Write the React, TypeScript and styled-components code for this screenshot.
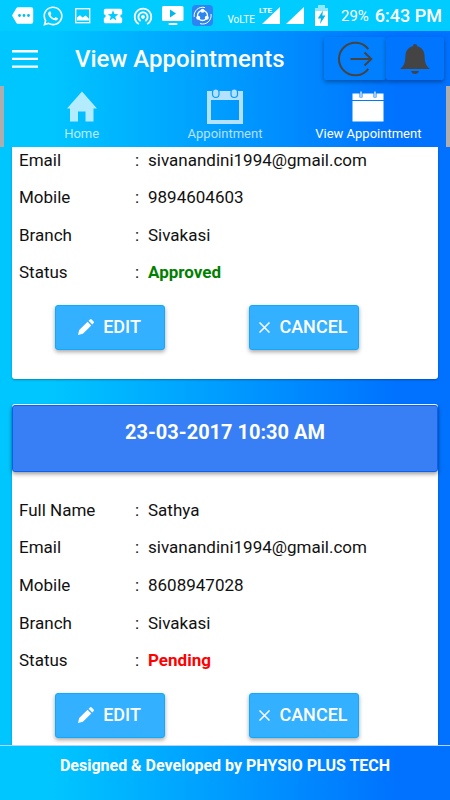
import React from "react";
import styled, { createGlobalStyle, css } from "styled-components";
import { FaWhatsapp } from "react-icons/fa";
import { MdLocalActivity, MdWifiTethering } from "react-icons/md";

const brandGradient = "linear-gradient(to right, #00c6ff 11%, #0072ff 88%)";

const GlobalStyle = createGlobalStyle`
  * { box-sizing: border-box; }
  body { margin: 0; font-family: Roboto, "Liberation Sans", sans-serif; }
  button { font-family: inherit; }
  svg { display: block; flex: none; }
`;

const Screen = styled.div`
  height: 100vh;
  display: flex;
  flex-direction: column;
  overflow: hidden;
  background: ${brandGradient};
`;

const StatusBar = styled.div`
  flex: none;
  height: 31px;
  padding: 0 8px 0 12px;
  display: flex;
  align-items: center;
  justify-content: space-between;
  background: #00ccff;
  color: #fff;
`;

const Notifications = styled.div`
  display: flex;
  align-items: center;
  gap: 8px;
`;

const Indicators = styled.div`
  display: flex;
  align-items: center;
`;

const NetworkLabel = styled.span`
  font-size: 10px;
  line-height: 12px;
  padding-top: 8px;
  margin-right: 4px;
`;

const BatteryLevel = styled.span`
  font-size: 15px;
  margin: 0 6px 0 12px;
`;

const Clock = styled.span`
  font-size: 18px;
  font-weight: 500;
`;

const TopArea = styled.header`
  flex: none;
`;

const TitleBar = styled.div`
  height: 55px;
  padding: 0 6px 0 12px;
  display: flex;
  align-items: center;
`;

const MenuButton = styled.button`
  border: 0;
  padding: 0;
  background: none;
  margin-right: 37px;
`;

const Title = styled.h1`
  flex: 1;
  margin: 0;
  font-size: 24px;
  line-height: 30px;
  font-weight: 500;
  color: #fff;
  white-space: nowrap;
`;

const ActionButton = styled.button<{ $wide?: boolean }>`
  width: ${(p) => (p.$wide ? 62 : 58)}px;
  height: 43px;
  padding: 0;
  border: 0;
  border-radius: 2px;
  background: ${(p) => (p.$wide ? "#007fff" : "#0075ff")};
  box-shadow: 0 2px 4px rgba(0, 0, 0, 0.35);
  display: flex;
  align-items: center;
  justify-content: center;
`;

const TabBar = styled.nav`
  height: 61px;
  padding: 0 6px;
  border: solid #adadad;
  border-width: 0 4px;
  display: flex;
`;

const Tab = styled.a<{ $active?: boolean }>`
  flex: 1 1 0;
  display: flex;
  flex-direction: column;
  align-items: center;
  padding-top: 2px;
  color: #fff;
  opacity: ${(p) => (p.$active ? 1 : 0.7)};
  font-size: 13px;
  line-height: 16px;
  text-decoration: none;
  white-space: nowrap;
`;

const Content = styled.main`
  flex: 1;
  min-height: 0;
  overflow: hidden;
  padding: 0 12px;
  display: flex;
  flex-direction: column;
  gap: 25px;
`;

const Card = styled.article<{ $continued?: boolean }>`
  flex: none;
  padding: ${(p) => (p.$continued ? "0" : "1px")} 0 29px;
  background: #fff;
  border-radius: ${(p) => (p.$continued ? "0 0 3px 3px" : "3px")};
  box-shadow: 0 1px 2px rgba(0, 0, 0, 0.3);
`;

const CardHeading = styled.h2`
  height: 67px;
  margin: 0 0 19px;
  padding-top: 14px;
  border: 1px solid #0c60ee;
  border-radius: 3px;
  background: #387ef5;
  box-shadow: 0 2px 4px rgba(0, 0, 0, 0.4);
  color: #fff;
  font-size: 20px;
  line-height: 24px;
  font-weight: 700;
  text-align: center;
`;

const Details = styled.dl<{ $continued?: boolean }>`
  margin: 0 7px 14px;
  height: 188px;
  display: grid;
  grid-auto-rows: 1fr;
  ${(p) =>
    p.$continued &&
    css`
      height: 150px;
      margin-top: -6px;
    `}
`;

const Detail = styled.div`
  display: flex;
  align-items: center;
  font-size: 17px;
  line-height: 24px;
  color: #111;
`;

const Label = styled.dt`
  width: 116px;
`;

const Value = styled.dd<{ $tone?: string }>`
  margin: 0;
  color: ${(p) => p.$tone ?? "inherit"};
  font-weight: ${(p) => (p.$tone ? 700 : 400)};
`;

const Colon = styled.span`
  width: 13px;
`;

const Buttons = styled.div`
  display: grid;
  grid-template-columns: 1fr 1fr;
  padding: 0 37px 0 43px;
  column-gap: 42px;
`;

const CardButton = styled.button`
  width: 110px;
  height: 45px;
  padding: 0 1px 1px 0;
  border: 1px solid #11a8ff;
  border-radius: 3px;
  background: #33b0ff;
  box-shadow: 0 2px 4px rgba(0, 0, 0, 0.35);
  color: #fff;
  display: flex;
  align-items: center;
  justify-content: center;
  gap: 9px;
  font-size: 18px;
  line-height: 24px;
  font-weight: 500;
`;

const Footer = styled.footer`
  flex: none;
  height: 55px;
  padding-top: 9px;
  border-top: 1px solid #b2d4ff;
  color: #fff;
  font-size: 16px;
  line-height: 22px;
  font-weight: 700;
  text-align: center;
`;

type Row = { label: string; value: string; tone?: string };

function DetailRows({ rows, continued }: { rows: Row[]; continued?: boolean }) {
  return (
    <Details $continued={continued}>
      {rows.map((r) => (
        <Detail key={r.label}>
          <Label>{r.label}</Label>
          <Colon>:</Colon>
          <Value $tone={r.tone}>{r.value}</Value>
        </Detail>
      ))}
    </Details>
  );
}

function CardActions() {
  return (
    <Buttons>
      <CardButton type="button">
        <svg width="16" height="16" viewBox="0 0 16 16" fill="#fff">
          <path d="M0 16l1.2-5L9.6 2.8l3.7 3.7-8.4 8.3zM10.6 1.8L12 .5q.8-.8 1.7 0l1.9 1.9q.8.8 0 1.6l-1.3 1.4z" />
        </svg>
        EDIT
      </CardButton>
      <CardButton type="button">
        <svg width="11" height="11" viewBox="0 0 11 11" stroke="#fff" strokeWidth="1.5">
          <path d="M.5.5l10 10M10.5.5l-10 10" />
        </svg>
        CANCEL
      </CardButton>
    </Buttons>
  );
}

function NotificationIcons() {
  return (
    <Notifications>
      <svg width="22" height="22" viewBox="0 0 22 22">
        <path fill="#fff" d="M6 2.2h13.4q1.8 0 1.8 1.8v13q0 1.8-1.8 1.8H6q-1 0-1.6-.9L0 10.5l4.4-7.4q.6-.9 1.6-.9z" />
        <g fill="#00bdf2">
          <circle cx="7.5" cy="10.5" r="1.4" />
          <circle cx="12" cy="10.5" r="1.4" />
          <circle cx="16.5" cy="10.5" r="1.4" />
        </g>
      </svg>
      <FaWhatsapp size={22} />
      <svg width="22" height="22" viewBox="0 0 22 22">
        <rect x="3.7" y="3.7" width="14" height="14" fill="none" stroke="#fff" strokeWidth="1.3" />
        <path fill="#fff" d="M5 15.5v-3l3-2.2 2.6 2.3 3-2 3.2 2.8v2.1z" />
      </svg>
      <MdLocalActivity size={22} />
      <MdWifiTethering size={22} />
      <svg width="22" height="22" viewBox="0 0 22 22">
        <rect y="1" width="21.5" height="15" rx="1.5" fill="#fff" />
        <path fill="#00b8f0" d="M8 4.5v8l6-4z" />
        <rect x="6.5" y="18" width="9" height="2" rx="1" fill="#fff" />
      </svg>
      <svg width="22" height="22" viewBox="0 0 22 22">
        <rect width="21" height="21" rx="4" fill="#2b86f3" />
        <g fill="none" stroke="#fff">
          <circle cx="10.5" cy="10.5" r="5" strokeWidth="1.3" />
          <path strokeWidth="1" d="M2.2 12A8.5 8.5 0 0 1 13 2.6M19 9A8.5 8.5 0 0 1 8 18.6" />
        </g>
        <g fill="#fff">
          <circle cx="10.5" cy="5.8" r="2" />
          <circle cx="6.2" cy="12.8" r="2" />
          <circle cx="14.8" cy="12.8" r="2" />
        </g>
      </svg>
    </Notifications>
  );
}

function SignalIcons() {
  return (
    <Indicators>
      <NetworkLabel>VoLTE</NetworkLabel>
      <svg width="22" height="19" viewBox="0 0 22 19">
        <path fill="#fff" d="M21 1v17H3z" />
        <path fill="#00ccff" d="M0 0h12v9H0z" />
        <text x="0" y="7" fill="#fff" fontSize="8" fontWeight="700" fontFamily="Roboto">
          LTE
        </text>
      </svg>
      <svg width="24" height="19" viewBox="0 0 24 19">
        <path fill="#fff" d="M23 1v17H5z" />
      </svg>
      <svg width="24" height="21" viewBox="0 0 24 21">
        <path fill="#8ee9ff" d="M13 0h7v3h3v5H10V3h3z" />
        <path fill="#fff" d="M10 6h13v15H10z" />
        <path fill="#00b8f0" d="M18 5.5l-5.2 8h3.2l-1 5.5 5.5-8.5h-3.2z" />
      </svg>
      <BatteryLevel>29%</BatteryLevel>
      <Clock>6:43 PM</Clock>
    </Indicators>
  );
}

export default function App() {
  return (
    <>
      <GlobalStyle />
      <Screen>
        <StatusBar>
          <NotificationIcons />
          <SignalIcons />
        </StatusBar>
        <TopArea>
          <TitleBar>
            <MenuButton type="button" aria-label="Menu">
              <svg width="26" height="20" viewBox="0 0 26 20" fill="#fff">
                <path d="M0 1h26v2.4H0zM0 8.7h26v2.4H0zM0 16.4h26v2.4H0z" />
              </svg>
            </MenuButton>
            <Title>View Appointments</Title>
            <ActionButton type="button" $wide aria-label="Log out">
              <svg width="36" height="36" viewBox="0 0 36 36" fill="none" stroke="#444" strokeWidth="2">
                <path d="M31.3 8.2A16.3 16.3 0 1 0 31.3 27.8M13.5 18H34M27.5 11.5L34.3 18l-6.8 6.5" />
              </svg>
            </ActionButton>
            <ActionButton type="button" aria-label="Notifications">
              <svg width="30" height="30" viewBox="0 0 30 30" fill="#444">
                <path d="M15 0q2 0 2.2 2.2C22 3.3 24.400 7 24.600 12c.2 7 1.200 9.500 5.400 13H0c4.200-3.500 5.200-6 5.400-13 .2-5 2.600-8.700 7.400-9.800Q13 0 15 0zM11 27h8q-1 3-4 3t-4-3z" />
              </svg>
            </ActionButton>
          </TitleBar>
          <TabBar>
            <Tab href="#home">
              <svg width="38" height="38" viewBox="0 0 38 38" fill="#fff">
                <path d="M19 3.500L34 20.500h-3.500V33.500h-8V23.500h-7.500v10h-8V20.500H4z" />
              </svg>
              Home
            </Tab>
            <Tab href="#appointment">
              <svg width="38" height="38" viewBox="0 0 38 38">
                <path fill="#fff" fillRule="evenodd" d="M1 3h36v33H1zM5 12v20h28V12z" />
                <g fill="#fff" stroke="#0a9cff" strokeWidth="1.2">
                  <rect x="6.5" y="1" width="6.5" height="8.500" rx="3.2" />
                  <rect x="25" y="1" width="6.5" height="8.500" rx="3.2" />
                </g>
              </svg>
              Appointment
            </Tab>
            <Tab href="#view" $active aria-current="page">
              <svg width="38" height="38" viewBox="0 0 38 38">
                <path fill="#fff" d="M3.500 5.500h31V12h-31zM3.500 13h31v20.500h-31z" />
                <path stroke="#0a7cff" strokeWidth="3" d="M12 4.500v5M26 4.500v5" />
                <path stroke="#fff" strokeWidth="1.2" d="M12 3.500v5.500M26 3.500v5.500" />
              </svg>
              View Appointment
            </Tab>
          </TabBar>
        </TopArea>
        <Content>
          <Card $continued>
            <DetailRows
              continued
              rows={[
                { label: "Email", value: "sivanandini1994@gmail.com" },
                { label: "Mobile", value: "9894604603" },
                { label: "Branch", value: "Sivakasi" },
                { label: "Status", value: "Approved", tone: "#008000" },
              ]}
            />
            <CardActions />
          </Card>
          <Card>
            <CardHeading>23-03-2017 10:30 AM</CardHeading>
            <DetailRows
              rows={[
                { label: "Full Name", value: "Sathya" },
                { label: "Email", value: "sivanandini1994@gmail.com" },
                { label: "Mobile", value: "8608947028" },
                { label: "Branch", value: "Sivakasi" },
                { label: "Status", value: "Pending", tone: "#ff0000" },
              ]}
            />
            <CardActions />
          </Card>
        </Content>
        <Footer>Designed &amp; Developed by PHYSIO PLUS TECH</Footer>
      </Screen>
    </>
  );
}
